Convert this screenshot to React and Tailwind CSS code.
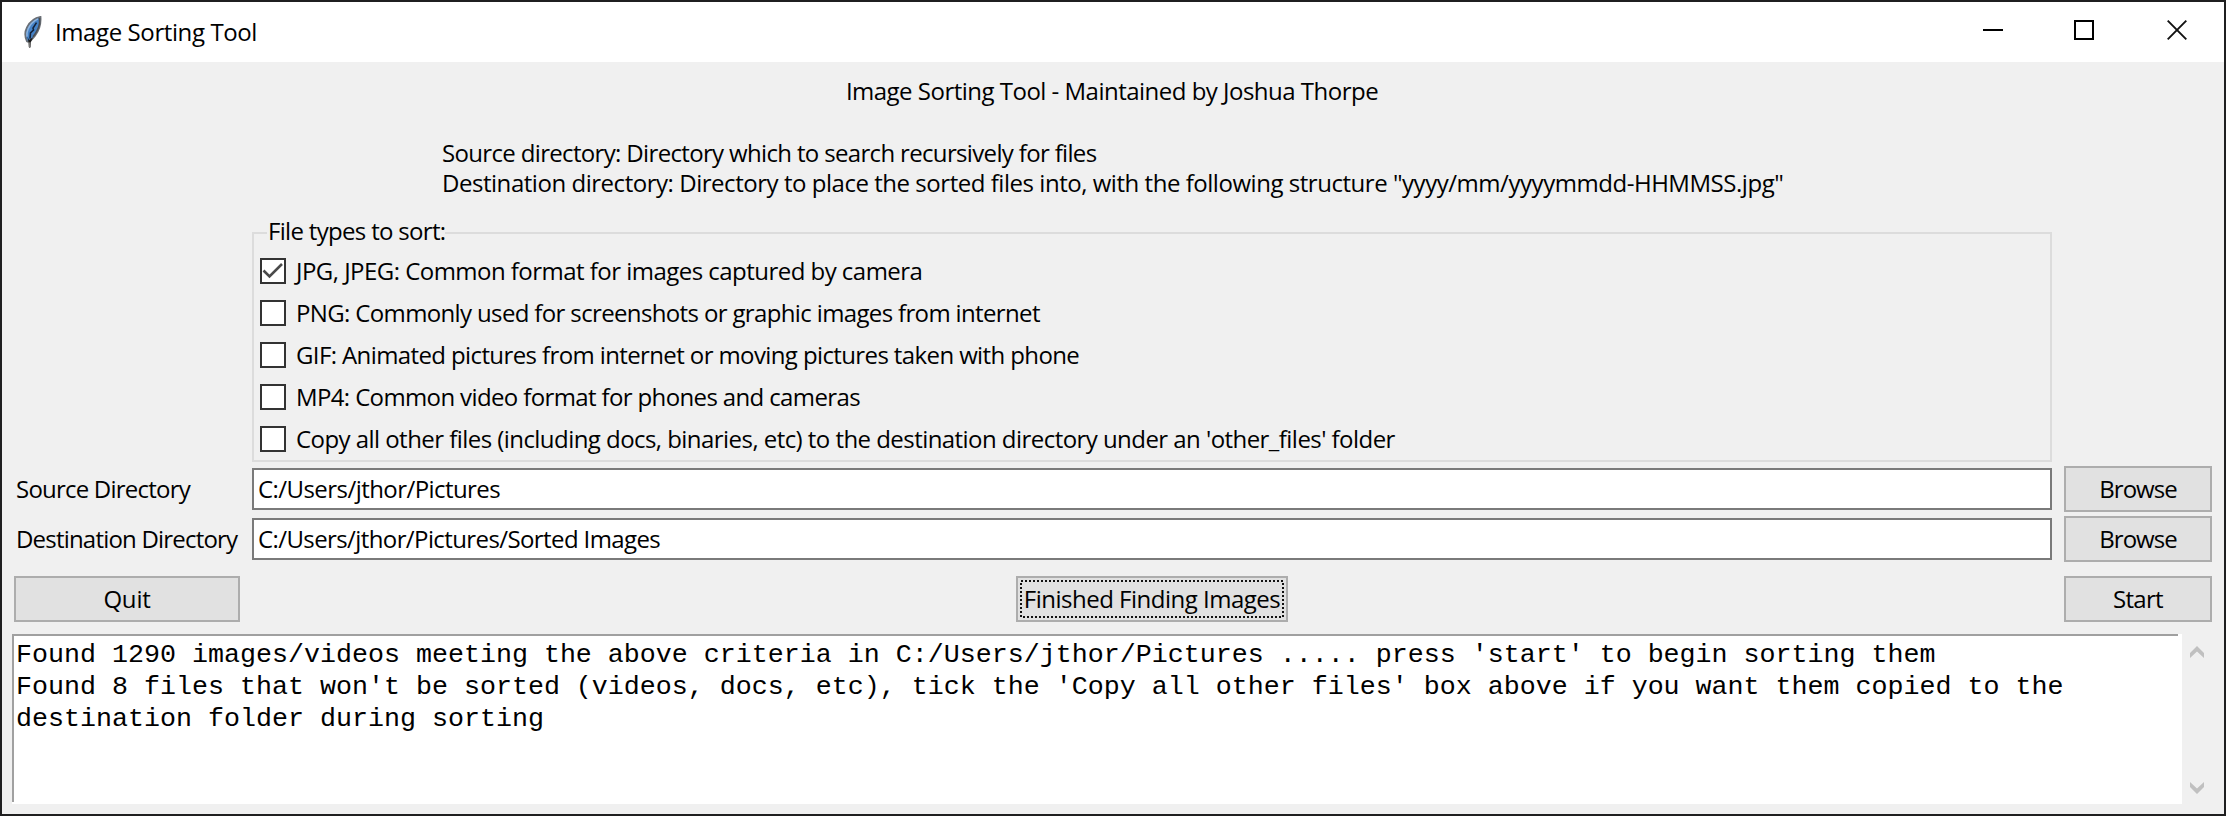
const fileTypes = [
  { label: "JPG, JPEG: Common format for images captured by camera", tracking: "tracking-[-0.53px]", checked: true },
  { label: "PNG: Commonly used for screenshots or graphic images from internet", tracking: "tracking-[-0.64px]" },
  { label: "GIF: Animated pictures from internet or moving pictures taken with phone", tracking: "tracking-[-0.61px]" },
  { label: "MP4: Common video format for phones and cameras", tracking: "tracking-[-0.63px]" },
  {
    label: "Copy all other files (including docs, binaries, etc) to the destination directory under an 'other_files' folder",
    tracking: "tracking-[-0.55px]",
  },
];

const directories = [
  {
    label: "Source Directory",
    labelTracking: "tracking-[-0.78px]",
    value: "C:/Users/jthor/Pictures",
    valueTracking: "tracking-[-0.56px]",
  },
  {
    label: "Destination Directory",
    labelTracking: "tracking-[-0.8px]",
    value: "C:/Users/jthor/Pictures/Sorted Images",
    valueTracking: "tracking-[-0.6px]",
  },
];

const row = "grid grid-cols-[226px_1800px_148px] gap-x-3 px-3";

function FeatherIcon() {
  return (
    <svg className="h-8 w-[18px]" viewBox="0 0 18 34" preserveAspectRatio="none">
      <path d="M16.5 1 C11 2 6 6 3 12 C0.5 17 0.8 22 3 27 C5 28.500 8 25 11 21 C15 15.500 17 8 16.500 1 Z" fill="#4583c8" stroke="#6a6f76" strokeWidth="1.8" />
      <path d="M14 3 C10 5 6 9 4 14 C2.800 17 2.600 20 3 22" fill="none" stroke="#8fb4de" strokeWidth="1.500" />
      <path d="M15.500 2 L15.500 8 C14.500 14 12 18 9 22" fill="none" stroke="#4a4d52" strokeWidth="1.500" />
      <path d="M12.500 7 L9 13 L9.500 15 L6.500 18 L6 24" fill="none" stroke="#14233a" strokeWidth="1.600" />
      <path d="M3.500 22 L5 25.500 L9 22.500 L6.800 28 L6.500 33 L4.800 33 L4.500 28 Z" fill="#1b1b1b" />
      <path d="M5.700 28 L5.700 34" stroke="#777" strokeWidth="1.500" />
    </svg>
  );
}

function Button({ children, className = "" }) {
  return (
    <button
      className={`flex h-[46px] items-center justify-center border-2 border-[#adadad] bg-[#e1e1e1] whitespace-nowrap ${className}`}
    >
      {children}
    </button>
  );
}

function Checkbox({ checked }) {
  return (
    <span className="flex size-[26px] shrink-0 items-center justify-center border-2 border-[#333333] bg-white">
      {checked && (
        <svg className="size-[22px]" viewBox="0 0 22 22" fill="none" stroke="#4a4a4a" strokeWidth="2.600">
          <path d="M1.500 10.500 L7.500 16.500 L20 4" />
        </svg>
      )}
    </span>
  );
}

function ScrollArrow({ down }) {
  return (
    <svg className="h-3 w-[14px]" viewBox="0 0 14 12" fill="#c0c0c0">
      <path d={down ? "M0 0 L7 6.500 L14 0 V5 L7 12 L0 5 Z" : "M7 0 L14 7 V12 L7 5.500 L0 12 V7 Z"} />
    </svg>
  );
}

function TitleBar() {
  return (
    <header className="flex h-[60px] items-center justify-between bg-white">
      <div className="flex items-center pl-[22px]">
        <FeatherIcon />
        <h1 className="pl-[13px] tracking-[-0.4px]">Image Sorting Tool</h1>
      </div>
      <div className="flex h-full items-start pt-[18px] pr-[37px]">
        <svg className="mr-[71px] size-5" viewBox="0 0 20 20">
          <path d="M0 10 H20" stroke="#000" strokeWidth="2" />
        </svg>
        <svg className="mr-[73px] size-5" viewBox="0 0 20 20">
          <rect x="1" y="1" width="18" height="18" fill="none" stroke="#000" strokeWidth="2" />
        </svg>
        <svg className="size-5" viewBox="0 0 20 20">
          <path d="M0.700 0.700 L19.300 19.300 M19.300 0.700 L0.700 19.300" stroke="#111" strokeWidth="1.900" />
        </svg>
      </div>
    </header>
  );
}

export default function App() {
  return (
    <div className="flex h-[816px] w-[2226px] flex-col overflow-hidden border-2 border-[#1f1f20] bg-[#f0f0f0] font-['Open_Sans','Noto_Sans',sans-serif] text-[24px] leading-[30px] text-black">
      <TitleBar />
      <main className="flex flex-col">
        <p className="pt-[14px] pr-[2px] text-center tracking-[-0.51px]">
          Image Sorting Tool - Maintained by Joshua Thorpe
        </p>
        <div className="mx-auto mt-8 w-[1342px] whitespace-nowrap">
          <p className="tracking-[-0.66px]">Source directory: Directory which to search recursively for files</p>
          <p className="tracking-[-0.464px]">
            Destination directory: Directory to place the sorted files into, with the following structure
            "yyyy/mm/yyyymmdd-HHMMSS.jpg"
          </p>
        </div>

        <div className={`${row} mt-[34px]`}>
          <section className="relative col-start-2 flex h-[230px] flex-col gap-3 border-2 border-[#dcdcdc] pt-[22px] pl-[6px]">
            <h2 className="absolute -top-[18px] left-[13px] bg-[#f0f0f0] pl-[1px] tracking-[-0.68px]">
              File types to sort:
            </h2>
            {fileTypes.map((type) => (
              <label key={type.label} className="flex h-[30px] items-center gap-[10px] whitespace-nowrap">
                <Checkbox checked={type.checked} />
                <span className={type.tracking}>{type.label}</span>
              </label>
            ))}
          </section>
        </div>

        <div className="flex flex-col gap-1 pt-1">
          {directories.map((dir) => (
            <div key={dir.label} className={`${row} items-center`}>
              <span className={`pl-[2px] whitespace-nowrap ${dir.labelTracking}`}>{dir.label}</span>
              <div className="flex h-[42px] items-center border-2 border-[#7a7a7a] bg-white pl-[4px]">
                <span className={dir.valueTracking}>{dir.value}</span>
              </div>
              <Button className="tracking-[-1px]">Browse</Button>
            </div>
          ))}
        </div>

        <div className={`${row} mt-[14px]`}>
          <Button className="tracking-[-0.2px]">Quit</Button>
          <Button className="w-[272px] justify-self-center">
            <span className="relative flex h-[38px] w-[264px] items-center justify-center tracking-[-0.5px]">
              <svg className="absolute inset-0 size-full" viewBox="0 0 264 38">
                <rect x="1" y="1" width="262" height="36" fill="none" stroke="#111" strokeWidth="2" strokeDasharray="2 2" />
              </svg>
              Finished Finding Images
            </span>
          </Button>
          <Button className="tracking-[-0.68px]">Start</Button>
        </div>

        <div className="mt-3 ml-[10px] flex h-[170px]">
          <div className="w-[2170px] border-r-4 border-b-2 border-white bg-white">
            <pre className="h-full border-t-2 border-l-2 border-[#a0a0a0] pt-[3px] pl-[2px] font-['Liberation_Mono',monospace] text-[26.667px] leading-8">
              {`Found 1290 images/videos meeting the above criteria in C:/Users/jthor/Pictures ..... press 'start' to begin sorting them
Found 8 files that won't be sorted (videos, docs, etc), tick the 'Copy all other files' box above if you want them copied to the
destination folder during sorting`}
            </pre>
          </div>
          <div className="flex flex-col justify-between pt-3 pb-[10px] pl-2">
            <ScrollArrow />
            <ScrollArrow down />
          </div>
        </div>
      </main>
    </div>
  );
}
